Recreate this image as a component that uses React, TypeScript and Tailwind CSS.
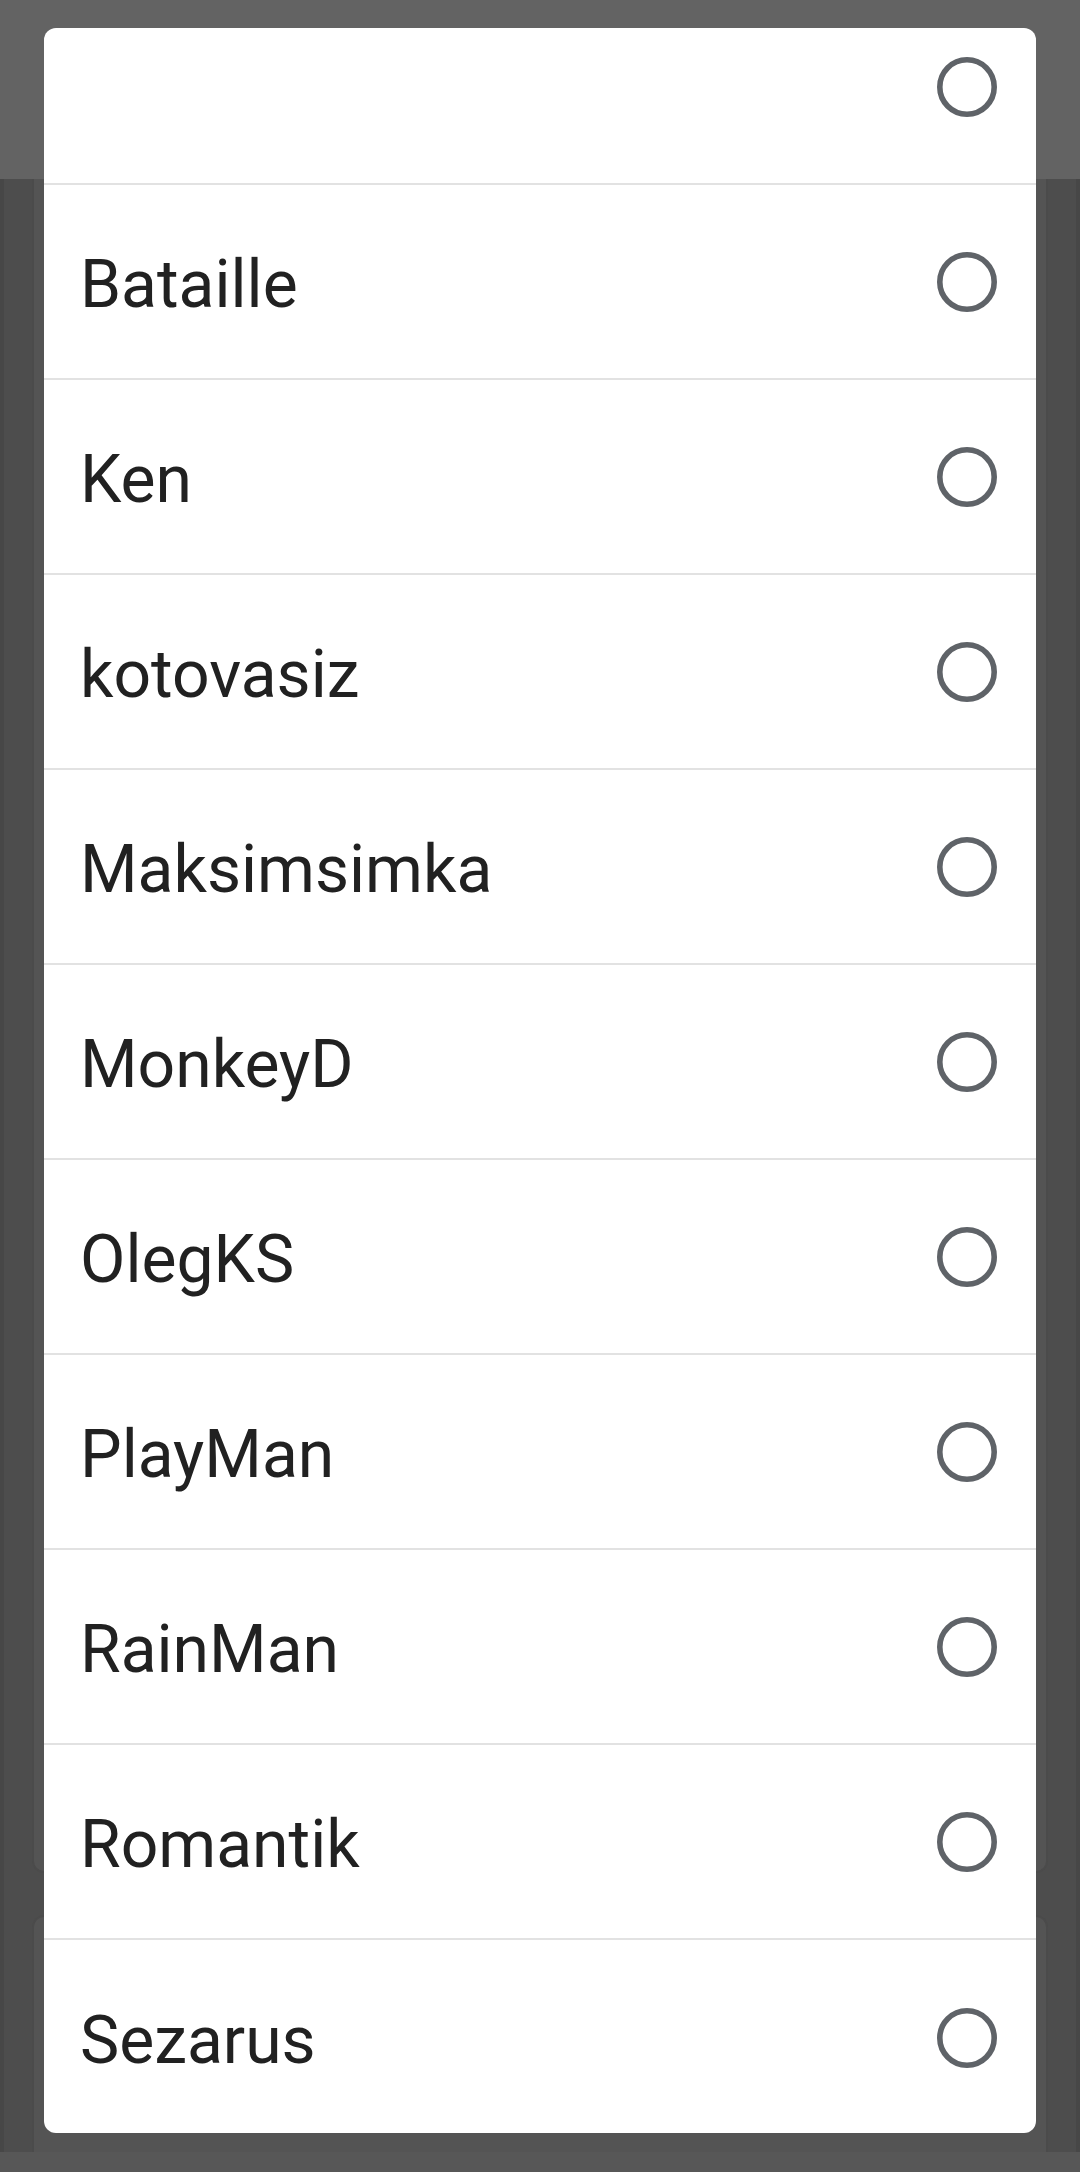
const names = ["", "Bataille", "Ken", "kotovasiz", "Maksimsimka", "MonkeyD", "OlegKS", "PlayMan", "RainMan", "Romantik", "Sezarus"];

function Radio() {
  return (
    <svg width="60" height="60" viewBox="0 0 60 60" className="shrink-0">
      <circle cx="30" cy="30" r="27.2" fill="none" stroke="#5f6368" strokeWidth="5.6" />
    </svg>
  );
}

export default function App() {
  return (
    <div className="relative w-[1080px] h-[2172px] overflow-hidden flex flex-col bg-[#4d4d4d]" style={{ fontFamily: "Roboto, 'Noto Sans', sans-serif" }}>
      {/* dimmed app behind the dialog */}
      <div className="h-[179px] bg-[#636363] shrink-0" />
      <div className="flex-1 flex flex-col gap-[42px] px-[28px] border-l-[4px] border-r-[4px] border-[#474747]">
        <div className="h-[1694px] bg-[#545454] rounded-b-[12px] border-x-2 border-b-2 border-[#4b4b4b]" />
        <div className="flex-1 bg-[#545454] rounded-t-[12px] border-x-2 border-t-2 border-[#4b4b4b]" />
      </div>
      <div className="h-[20px] bg-[#575757] shrink-0" />

      {/* dialog */}
      <div className="absolute left-[44px] top-[28px] w-[992px] h-[2105px] bg-white rounded-[12px] overflow-hidden">
        <div className="-mt-[38px] flex flex-col">
          {names.map((n, i) => (
            <div key={i} className={"h-[195px] flex items-center justify-between pl-[36px] pr-[39px] " + (i < names.length - 1 ? "border-b-2 border-[#e2e2e2]" : "")}>
              <span className="mt-[7px] text-[66px] leading-none text-[#212121]">{n}</span>
              <Radio />
            </div>
          ))}
        </div>
      </div>
    </div>
  );
}
